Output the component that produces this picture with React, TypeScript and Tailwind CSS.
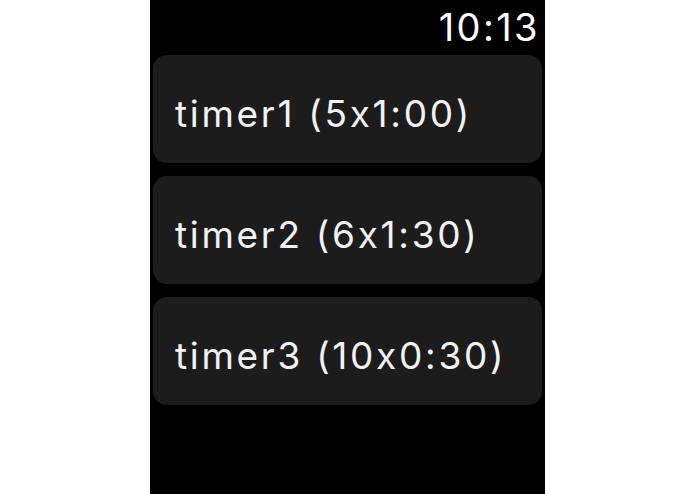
import React from "react";

const timers = ["timer1 (5x1:00)", "timer2 (6x1:30)", "timer3 (10x0:30)"];

export default function App() {
  return (
    <div className="w-[695px] h-[494px] bg-white flex justify-center">
      <div
        className="w-[395px] h-[494px] bg-black px-[3px] flex flex-col"
        style={{ fontFamily: 'Inter, "Liberation Sans", Arial, sans-serif' }}
      >
        <div className="h-[55px] flex items-start justify-end pr-[2px] pt-[8px]">
          <span className="text-[38px] leading-[38px] tracking-[2.4px] text-white">10:13</span>
        </div>
        <div className="flex flex-col gap-[13px]">
          {timers.map((t) => (
            <div
              key={t}
              className="h-[108px] rounded-[14px] bg-[#1c1c1c] flex items-center pl-[22px] pt-[8px]"
            >
              <span className="text-[37px] leading-[37px] tracking-[2.7px] text-[#f2f2f2]">
                {t}
              </span>
            </div>
          ))}
        </div>
      </div>
    </div>
  );
}
